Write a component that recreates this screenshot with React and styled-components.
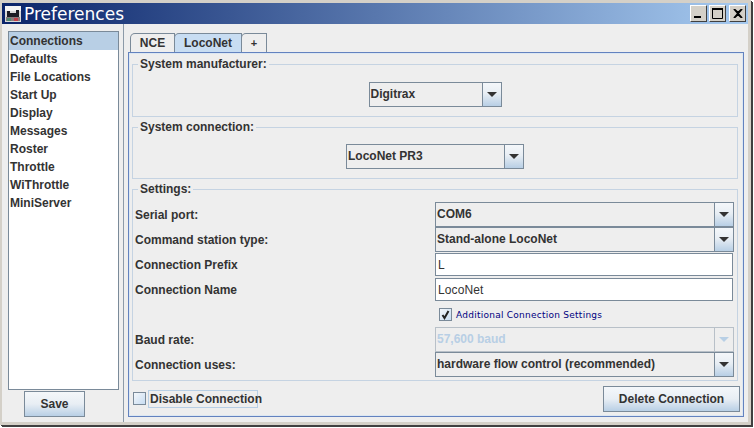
import React from 'react';
import styled, { createGlobalStyle } from 'styled-components';

const Global = createGlobalStyle`
  html, body { margin: 0; padding: 0; background: #fff; }
  body { font-family: "Liberation Sans", Arial, sans-serif; }
  * { box-sizing: border-box; }
`;

const prefs = ['Connections', 'Defaults', 'File Locations', 'Start Up', 'Display', 'Messages', 'Roster', 'Throttle', 'WiThrottle', 'MiniServer'];

export default function App() {
  return (
    <Desktop>
      <Global />
      <Frame>
        <TitleBar>
          <TitleIcon viewBox="0 0 16 16">
            <rect width="16" height="16" fill="#d8d8d8" />
            <rect x="0" y="0" width="16" height="5" fill="#f4f4f4" />
            <path d="M2 5h3v2h6V4h3v7H2z" fill="#1c1c24" />
            <rect x="1" y="11" width="14" height="4" fill="#8a7a7c" />
            <rect x="9" y="12" width="4" height="3" fill="#c0404a" />
            <rect x="2" y="12" width="4" height="3" fill="#4f8a70" />
          </TitleIcon>
          <Title>Preferences</Title>
          <WindowButtons>
            <WinButton>
              <svg width="9" height="9" viewBox="0 0 9 9"><rect x="0" y="7" width="7" height="2" fill="#000" /></svg>
            </WinButton>
            <WinButton>
              <svg width="11" height="11" viewBox="0 0 11 11"><path d="M.5 1.5h10v9H.5z" fill="none" stroke="#000" /><rect x="0" y="0" width="11" height="2" fill="#000" /></svg>
            </WinButton>
            <WinButton $gap>
              <svg width="10" height="9" viewBox="0 0 10 9"><path d="M1 0l4 3.6L9 0M1 9l4-3.6L9 9M1 0l8 9M9 0L1 9" fill="none" stroke="#000" strokeWidth="1.8" /></svg>
            </WinButton>
          </WindowButtons>
        </TitleBar>
        <Body>
          <Sidebar>
            <PrefList>
              {prefs.map((p, i) => <PrefItem key={p} $selected={i === 0}>{p}</PrefItem>)}
            </PrefList>
            <SaveRow><PlainButton $w={61} $h={26}>Save</PlainButton></SaveRow>
          </Sidebar>
          <Divider />
          <Main>
            <Tabs>
              <Tab $w={45}>NCE</Tab>
              <Tab $w={68} $active>LocoNet</Tab>
              <Tab $w={26} $small>+</Tab>
            </Tabs>
            <TabPanel>
              <Group>
                <legend>System manufacturer:</legend>
                <Centered $top={10} $bottom={9}>
                  <Combo value="Digitrax" $w={133} />
                </Centered>
              </Group>
              <Group>
                <legend>System connection:</legend>
                <Centered $top={9} $bottom={9}>
                  <Combo value="LocoNet PR3" $w={178} />
                </Centered>
              </Group>
              <Group>
                <legend>Settings:</legend>
                <Settings>
                  <Label>Serial port:</Label>
                  <Combo value="COM6" />
                  <Label>Command station type:</Label>
                  <Combo value="Stand-alone LocoNet" />
                  <Label>Connection Prefix</Label>
                  <TextField>L</TextField>
                  <Label>Connection Name</Label>
                  <TextField>LocoNet</TextField>
                  <span />
                  <AdvancedRow>
                    <SmallCheck>
                      <svg width="11" height="11" viewBox="0 0 11 11"><path d="M2.5 6l2 3 4-7" fill="none" stroke="#222" strokeWidth="2" /></svg>
                    </SmallCheck>
                    <AdvancedText>Additional Connection Settings</AdvancedText>
                  </AdvancedRow>
                  <Label>Baud rate:</Label>
                  <Combo value="57,600 baud" disabled />
                  <Label>Connection uses:</Label>
                  <Combo value="hardware flow control (recommended)" />
                </Settings>
              </Group>
              <BottomRow>
                <DisableWrap>
                  <EmptyCheck />
                  <FocusLabel>Disable Connection</FocusLabel>
                </DisableWrap>
                <PlainButton $w={137} $h={26}>Delete Connection</PlainButton>
              </BottomRow>
            </TabPanel>
          </Main>
        </Body>
      </Frame>
    </Desktop>
  );
}

function Combo({ value, disabled, $w }) {
  return (
    <ComboBox $w={$w} $disabled={disabled}>
      <ComboValue $disabled={disabled}>{value}</ComboValue>
      <ComboArrow $disabled={disabled}><Triangle $disabled={disabled} /></ComboArrow>
    </ComboBox>
  );
}

const Desktop = styled.div`
  width: 754px;
  height: 428px;
  overflow: hidden;
  background: #fff;
`;

const Frame = styled.div`
  width: 751px;
  height: 425px;
  display: flex;
  flex-direction: column;
  background: #eeeeee;
  border-top: 3px solid #d4d0c8;
  border-left: 2px solid #d4d0c8;
  border-right: 3px solid #d4d0c8;
  border-bottom: 3px solid #d4d0c8;
  box-shadow: 1px 1px 0 #404040, 2px 2px 0 #404040;
`;

const TitleBar = styled.div`
  height: 21px;
  flex: none;
  display: flex;
  align-items: center;
  padding: 0 2px 0 3px;
  background: linear-gradient(90deg, #0a246a, #a6caf0);
`;

const TitleIcon = styled.svg`
  width: 16px;
  height: 16px;
  flex: none;
`;

const Title = styled.div`
  margin-left: 3px;
  font-family: "DejaVu Sans", sans-serif;
  font-size: 17px;
  color: #fff;
  flex: 1;
`;

const WindowButtons = styled.div`
  display: flex;
  align-items: center;
`;

const WinButton = styled.div`
  width: 17px;
  height: 17px;
  margin-left: ${p => (p.$gap ? 3 : 2)}px;
  display: flex;
  align-items: center;
  justify-content: center;
  background: #d4d0c8;
  border: 1px solid;
  border-color: #fff #404040 #404040 #fff;
`;

const Body = styled.div`
  flex: 1;
  display: flex;
  min-height: 0;
`;

const Sidebar = styled.div`
  width: 121px;
  flex: none;
  padding: 7px 0 0 6px;
  display: flex;
  flex-direction: column;
`;

const PrefList = styled.div`
  width: 111px;
  height: 359px;
  background: #fff;
  border: 1px solid #7a8a99;
`;

const PrefItem = styled.div`
  height: 18px;
  line-height: 18px;
  padding-left: 1px;
  font-size: 12px;
  font-weight: bold;
  color: #333;
  background: ${p => (p.$selected ? '#b8cfe5' : '#fff')};
`;

const SaveRow = styled.div`
  display: flex;
  padding: 1px 0 0 16px;
`;

const PlainButton = styled.div`
  width: ${p => p.$w}px;
  height: ${p => p.$h}px;
  display: flex;
  align-items: center;
  justify-content: center;
  font-size: 12px;
  font-weight: bold;
  color: #333;
  border: 1px solid #7a8a99;
  background: linear-gradient(#f4f7fa, #e8eef4 50%, #b8cfe5);
`;

const Divider = styled.div`
  width: 1px;
  flex: none;
  background: #8c9aa8;
`;

const Main = styled.div`
  flex: 1;
  padding: 9px 0 5px 4px;
  display: flex;
  flex-direction: column;
  min-width: 0;
`;

const Tabs = styled.div`
  display: flex;
  height: 19px;
  padding-left: 2px;
  flex: none;
`;

const Tab = styled.div`
  width: ${p => p.$w}px;
  margin-right: -1px;
  display: flex;
  align-items: center;
  justify-content: center;
  font-size: ${p => (p.$small ? 11 : 12)}px;
  font-weight: bold;
  color: #333;
  background: ${p => (p.$active ? '#c8ddf2' : '#eeeeee')};
  border: 1px solid #7a8a99;
  border-bottom: none;
  border-top-left-radius: 5px;
  position: relative;
  z-index: ${p => (p.$active ? 1 : 0)};
`;

const TabPanel = styled.div`
  width: 616px;
  flex: 1;
  display: flex;
  flex-direction: column;
  gap: 2px;
  padding: 3px 3px 0 3px;
  background: #eeeeee;
  border: 1px solid #6382bf;
  box-shadow: inset 0 0 0 1px #dce7f2;
`;

const Group = styled.fieldset`
  margin: 0 2px 0 0;
  padding: 0 2px;
  min-width: 0;
  border: 1px solid #c5d3e2;
  flex: none;

  legend {
    margin-left: 3px;
    padding: 0 2px;
    height: 16px;
    line-height: 16px;
    font-size: 12px;
    font-weight: bold;
    color: #333;
  }
`;

const Centered = styled.div`
  display: flex;
  justify-content: center;
  padding: ${p => p.$top}px 0 ${p => p.$bottom}px;
`;

const Settings = styled.div`
  display: grid;
  grid-template-columns: 1fr 299px;
  grid-auto-rows: 25px;
  padding: 5px 1px 3px 0;
  align-items: center;
`;

const Label = styled.div`
  font-size: 12px;
  font-weight: bold;
  color: #333;
`;

const ComboBox = styled.div`
  width: ${p => (p.$w ? `${p.$w}px` : '100%')};
  height: 25px;
  display: flex;
  background: #eeeeee;
  border: 1px solid ${p => (p.$disabled ? '#b8c0c8' : '#7a8a99')};
`;

const ComboValue = styled.div`
  flex: 1;
  min-width: 0;
  padding-left: 1px;
  line-height: 23px;
  font-size: 12px;
  font-weight: bold;
  white-space: nowrap;
  color: ${p => (p.$disabled ? '#b8cfe5' : '#333')};
`;

const ComboArrow = styled.div`
  width: 19px;
  flex: none;
  display: flex;
  align-items: center;
  justify-content: center;
  border-left: 1px solid ${p => (p.$disabled ? '#b8c0c8' : '#7a8a99')};
  background: ${p => (p.$disabled ? '#eeeeee' : 'linear-gradient(#f4f7fa, #e8eef4 45%, #b8cfe5)')};
`;

const Triangle = styled.div`
  width: 0;
  height: 0;
  border-left: 5px solid transparent;
  border-right: 5px solid transparent;
  border-top: 5px solid ${p => (p.$disabled ? '#b8cfe5' : '#333')};
`;

const TextField = styled.div`
  height: 23px;
  padding-left: 2px;
  line-height: 22px;
  font-size: 12px;
  color: #333;
  background: #fff;
  border: 1px solid #7a8a99;
  margin-right: 1px;
  letter-spacing: 0.1px;
`;

const AdvancedRow = styled.div`
  display: flex;
  align-items: center;
  padding-left: 4px;
  gap: 4px;
`;

const SmallCheck = styled.div`
  width: 13px;
  height: 13px;
  display: flex;
  align-items: center;
  justify-content: center;
  border: 1px solid #7a8a99;
  background: linear-gradient(135deg, #f4f7fa, #c8ddf2);
`;

const AdvancedText = styled.span`
  font-family: "DejaVu Sans", sans-serif;
  font-size: 9px;
  letter-spacing: 0.25px;
  color: #000080;
  white-space: nowrap;
`;

const BottomRow = styled.div`
  flex: 1;
  display: flex;
  align-items: center;
  justify-content: space-between;
  padding: 0 0 2px 1px;
`;

const DisableWrap = styled.div`
  display: flex;
  align-items: center;
  gap: 2px;
`;

const EmptyCheck = styled.div`
  width: 13px;
  height: 13px;
  border: 1px solid #7a8a99;
  background: linear-gradient(135deg, #f4f7fa, #c8ddf2);
`;

const FocusLabel = styled.div`
  height: 18px;
  padding: 0 0 0 1px;
  width: 110px;
  line-height: 16px;
  font-size: 12px;
  font-weight: bold;
  color: #333;
  border: 1px solid #b8cfe5;
  white-space: nowrap;
`;
